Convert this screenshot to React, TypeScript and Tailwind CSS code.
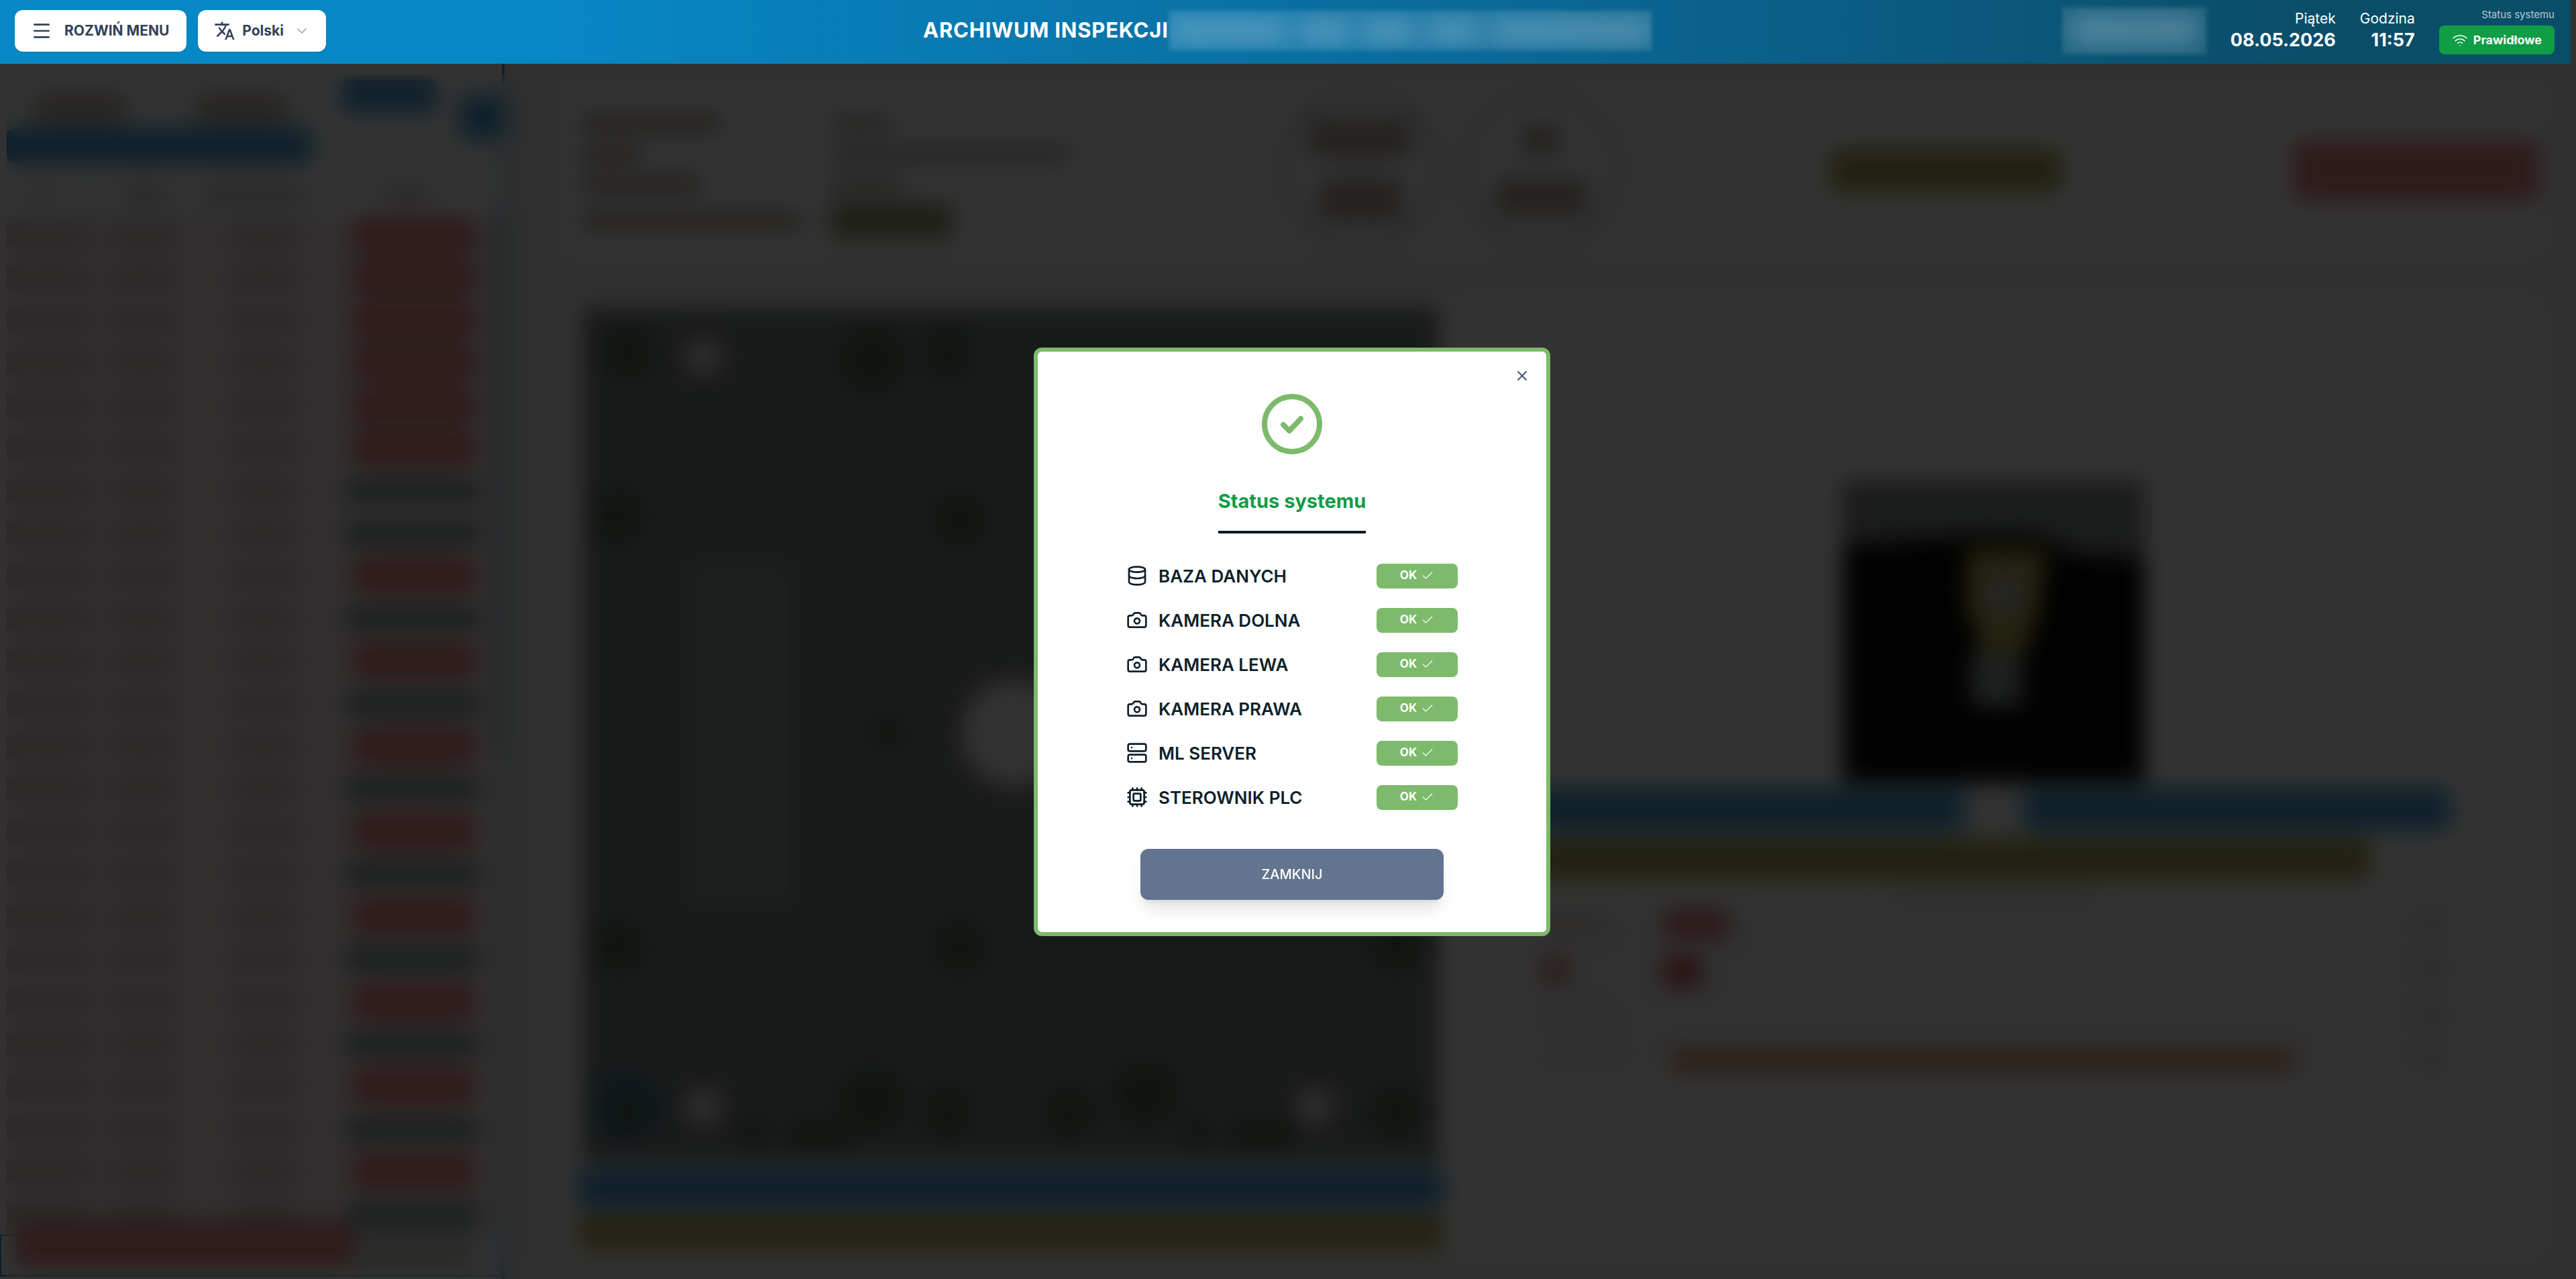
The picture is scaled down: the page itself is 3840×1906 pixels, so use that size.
import { Camera, Check, ChevronDown, Cpu, Database, Menu, Server, Wifi, X } from 'lucide-react';
import { MdTranslate } from 'react-icons/md';

const statusRows = [
  { label: 'BAZA DANYCH', icon: Database },
  { label: 'KAMERA DOLNA', icon: Camera },
  { label: 'KAMERA LEWA', icon: Camera },
  { label: 'KAMERA PRAWA', icon: Camera },
  { label: 'ML SERVER', icon: Server },
  { label: 'STEROWNIK PLC', icon: Cpu },
];

// true = rejected (red badge), false = accepted
const inspections = [
  true, true, true, true, true, true, false, false, true, false, true, false,
  true, false, true, false, true, false, true, false, true, false, true, false,
];

const Bar = ({ className }: { className: string }) => <div className={`shrink-0 rounded-xl ${className}`} />;

const Header = () => (
  <header className="relative z-20 mr-2 flex h-[95px] items-center justify-between bg-linear-to-r from-[#0788c6] from-20% via-[#0a6c9d] via-55% to-[#0a4d69] to-90% pr-6 pb-1 pl-[22px]">
    <div className="flex gap-[17px]">
      <button className="flex h-[62px] items-center gap-[18px] rounded-xl bg-white pr-[26px] pl-6 text-[21px] font-bold text-slate-700 shadow">
        <Menu className="size-8" strokeWidth={2} />
        ROZWIŃ MENU
      </button>
      <label className="relative flex h-[62px] items-center rounded-xl bg-white pl-6 text-slate-700 shadow">
        <MdTranslate className="size-8" />
        <select aria-label="Język" className="w-[135px] appearance-none pl-2.5 text-[21px] font-bold outline-none">
          <option>Polski</option>
        </select>
        <ChevronDown className="pointer-events-none absolute right-6 size-6 text-slate-400" strokeWidth={1.5} />
      </label>
    </div>

    <div className="absolute left-[1376px] flex items-center">
      <h1 className="text-[31px] font-bold tracking-wide text-white">ARCHIWUM INSPEKCJI</h1>
      <div className="flex h-[59px] w-[720px] items-center gap-4 overflow-hidden bg-white/10 blur-[3px]">
        <Bar className="h-9 w-44 bg-white/20 blur-lg" />
        <Bar className="h-9 w-20 bg-white/20 blur-lg" />
        <Bar className="h-9 w-20 bg-white/20 blur-lg" />
        <Bar className="h-9 w-20 bg-white/20 blur-lg" />
        <Bar className="h-9 w-60 bg-white/20 blur-lg" />
      </div>
    </div>

    <div className="flex items-center text-white">
      <div className="mr-9 h-[70px] w-[215px] overflow-hidden bg-white/10 p-3 blur-[3px]">
        <Bar className="h-11 w-full bg-white/20 blur-lg" />
      </div>
      <div className="mr-9 text-right">
        <p className="text-[21px] leading-7">Piątek</p>
        <p className="text-[27px] leading-9 font-bold">08.05.2026</p>
      </div>
      <div className="mr-9 text-right">
        <p className="text-[21px] leading-7">Godzina</p>
        <p className="text-[27px] leading-9 font-bold">11:57</p>
      </div>
      <div className="flex flex-col items-end gap-1">
        <p className="text-[15px] leading-6 text-white/70">Status systemu</p>
        <button className="flex h-[43px] items-center gap-2 rounded-lg bg-[#0f9d45] px-[19px] text-[18px] font-bold">
          <Wifi className="size-6" strokeWidth={1.5} />
          Prawidłowe
        </button>
      </div>
    </div>
  </header>
);

const Sidebar = () => (
  <aside className="flex w-[752px] shrink-0 flex-col border-r-4 border-[#46a0d2] bg-[#fafafa] pt-6">
    <div className="flex items-start pl-[50px]">
      <Bar className="mt-5 h-12 w-[140px] bg-[#c6bdb0]" />
      <Bar className="mt-5 ml-[100px] h-12 w-[140px] bg-[#c6bdb0]" />
      <Bar className="ml-20 h-12 w-[140px] bg-[#46a0d2]" />
      <Bar className="mt-6 ml-9 h-16 w-[62px] bg-[#46a0d2]" />
    </div>
    <Bar className="-mt-4 ml-[10px] h-[52px] w-[455px] bg-[#46a0d2]" />
    <div className="mt-9 flex h-5 items-center pl-[45px]">
      <Bar className="h-4 w-9 bg-[#c3bcb4]" />
      <Bar className="ml-[100px] h-5 w-[70px] bg-[#c3bcb4]" />
      <Bar className="ml-[50px] h-5 w-[155px] bg-[#c3bcb4]" />
      <Bar className="ml-[115px] h-5 w-[70px] bg-[#c3bcb4]" />
    </div>
    <div className="mt-[22px] flex flex-1 items-start bg-[#f5e8e8]">
      <div className="flex h-full flex-1 flex-col justify-between">
        {inspections.map((rejected, i) => (
          <div key={i} className="flex h-[60px] items-center pl-[10px]">
            <Bar className="h-9 w-[130px] bg-[#cdc9c3]" />
            <Bar className="ml-5 h-9 w-[105px] bg-[#cdc9c3]" />
            <Bar className="ml-[75px] h-9 w-[105px] bg-[#cdc9c3]" />
            {rejected ? (
              <Bar className="ml-[83px] h-[50px] w-[178px] bg-[#e67a7a]" />
            ) : (
              <Bar className="ml-[70px] h-9 w-[200px] bg-[#869f98]" />
            )}
          </div>
        ))}
      </div>
      <div className="h-[800px] w-[18px] bg-[#c8c8c8]" />
    </div>
    <div className="mb-1 flex h-[62px] items-start border-2 border-[#46a0d2] pl-6">
      <Bar className="-mt-5 h-16 w-[500px] bg-[#e68484]" />
      <Bar className="h-12 w-[180px] bg-[#d2d7c8]" />
    </div>
  </aside>
);

const Summary = () => (
  <section className="flex h-[270px] items-center justify-between rounded-2xl bg-[#fafafa] pr-4 pl-[34px]">
    <div className="flex w-[730px] gap-10 pt-5">
      <div className="flex w-[330px] flex-col gap-[22px]">
        <Bar className="h-6 w-[210px] bg-[#aaa094]" />
        <Bar className="h-6 w-[90px] bg-[#aaa094]" />
        <Bar className="h-6 w-[180px] bg-[#aaa094]" />
        <Bar className="mt-2 h-6 w-[330px] bg-[#aaa094]" />
      </div>
      <div className="flex flex-col gap-[22px]">
        <Bar className="h-6 w-[95px] bg-[#bbb6b0]" />
        <Bar className="h-6 w-[360px] bg-[#bbb6b0]" />
        <Bar className="h-6 w-[110px] bg-[#bbb6b0]" />
        <Bar className="-mt-2 h-14 w-[185px] bg-[#a0a07d]" />
      </div>
    </div>
    <div className="flex gap-7">
      <div className="flex size-[242px] flex-col items-center justify-center gap-8 rounded-full border-[10px] border-[#bebebe]">
        <Bar className="h-14 w-[150px] bg-[#b4aca2]" />
        <Bar className="h-16 w-[125px] bg-[#b4aca2]" />
      </div>
      <div className="flex size-[242px] flex-col items-center justify-center gap-9 rounded-full border-[10px] border-[#bebebe]">
        <Bar className="h-11 w-[58px] bg-[#b4aca2]" />
        <Bar className="h-14 w-[135px] bg-[#b4aca2]" />
      </div>
    </div>
    <Bar className="mr-9 h-16 w-[345px] bg-[#a5a55a]" />
    <Bar className="h-[88px] w-[365px] bg-[#e68484]" />
  </section>
);

const BoardImage = () => (
  <svg viewBox="0 0 1277 1275" className="w-full">
    <rect width="1277" height="1275" fill="#7a827f" />
    <g fill="#50624b">
      <circle cx="67" cy="69" r="36" />
      <circle cx="432" cy="78" r="46" />
      <circle cx="544" cy="69" r="34" />
      <circle cx="54" cy="312" r="36" />
      <circle cx="562" cy="317" r="36" />
      <circle cx="54" cy="953" r="36" />
      <circle cx="562" cy="953" r="36" />
      <circle cx="1212" cy="953" r="36" />
      <circle cx="432" cy="1182" r="46" />
      <circle cx="544" cy="1200" r="34" />
      <circle cx="726" cy="1200" r="34" />
      <circle cx="839" cy="1172" r="46" />
      <circle cx="1212" cy="1200" r="36" />
      <circle cx="455" cy="635" r="20" />
      <path d="M230 1245l25-45 25 40zM300 1250l30-50 25 30 45-40-10 65zM890 1245l25-45 25 40zM960 1250l30-50 25 30 45-40-10 65z" />
    </g>
    <rect x="163" y="387" width="147" height="500" fill="#8ca5a0" />
    <circle cx="67" cy="1192" r="48" fill="#3c7896" />
    <circle cx="67" cy="1200" r="28" fill="#50624b" />
    <circle cx="644" cy="635" r="80" fill="#faf5f5" />
    <g fill="#ebe1e1">
      <circle cx="180" cy="74" r="28" />
      <circle cx="180" cy="1191" r="28" />
      <circle cx="1091" cy="1191" r="28" />
    </g>
  </svg>
);

const CameraImage = () => (
  <svg viewBox="0 0 450 450" className="w-[450px]">
    <rect width="450" height="450" fill="#0a0a0a" />
    <path d="M0 0h450v115l-100-5-60-30-90 0-200 15z" fill="#828787" />
    <path d="M185 100h118l-8 85-25 75h-60l-28-80z" fill="#b4a546" />
    <path d="M208 135h65l-5 65h-58z" fill="#b9b9b4" />
    <rect x="192" y="250" width="74" height="85" fill="#96a09e" />
  </svg>
);

const Inspection = () => (
  <section className="flex flex-1 items-start rounded-2xl bg-[#fafafa] pt-[22px] pl-[30px]">
    <div className="flex w-[1290px] flex-col gap-[10px]">
      <div className="px-[6px]">
        <BoardImage />
      </div>
      <Bar className="h-[56px] bg-[#46a0d2]" />
      <Bar className="h-[54px] bg-[#b4a55a]" />
    </div>
    <div className="ml-[140px] flex w-[1360px] flex-col items-start pt-[260px]">
      <div className="mb-2 self-center">
        <CameraImage />
      </div>
      <div className="flex w-full gap-[88px]">
        <Bar className="h-[62px] flex-1 bg-[#46a0d2]" />
        <Bar className="h-[62px] flex-1 bg-[#46a0d2]" />
      </div>
      <Bar className="mt-3 h-[62px] w-[1242px] bg-[#a5a55a]" />
      <Bar className="mt-4 h-4 w-[320px] self-center bg-[#e1e1e1]" />
      <div className="mt-3 flex w-full justify-between bg-[#f2f2f2]">
        <div className="flex flex-col gap-6">
          <div className="flex w-[286px] justify-between">
            <Bar className="h-11 w-[110px] bg-[#e6e1dc]" />
            <Bar className="h-11 w-[98px] bg-[#dc7878]" />
          </div>
          <div className="flex w-[246px] justify-between">
            <Bar className="h-11 w-[50px] bg-[#dca0a0]" />
            <Bar className="h-12 w-[60px] bg-[#cd6464]" />
          </div>
          <Bar className="h-11 w-[110px] bg-[#e6e6e6]" />
          <div className="flex gap-[68px]">
            <Bar className="h-9 w-[130px] bg-[#ebe6e6]" />
            <Bar className="h-9 w-[930px] bg-[#dca078]" />
          </div>
        </div>
        <div className="flex w-[50px] flex-col justify-between">
          <Bar className="h-8 bg-[#dcdcdc]" />
          <Bar className="h-8 bg-[#dcdcdc]" />
          <Bar className="h-8 bg-[#dcdcdc]" />
          <Bar className="h-8 bg-[#dcdcdc]" />
        </div>
      </div>
    </div>
  </section>
);

const StatusDialog = () => (
  <div
    role="dialog"
    aria-modal="true"
    aria-labelledby="status-title"
    className="relative flex w-[770px] flex-col items-center rounded-xl border-[6px] border-[#7dba6b] bg-white pt-[63px] pb-12"
  >
    <button aria-label="Zamknij okno" className="absolute top-6 right-6 text-slate-600">
      <X className="size-6" strokeWidth={2} />
    </button>
    <svg viewBox="0 0 90 90" fill="none" className="size-[90px] text-[#7dba6b]" stroke="currentColor">
      <circle cx="45" cy="45" r="41" strokeWidth="8" />
      <path d="M32 46l9 9 17-18" strokeWidth="8" strokeLinecap="round" strokeLinejoin="round" />
    </svg>
    <h2 id="status-title" className="mt-[50px] border-b-4 border-gray-900 pb-6 text-[29px] leading-10 font-bold text-[#0f9d45]">
      Status systemu
    </h2>
    <ul className="mt-[45px] flex w-[494px] flex-col gap-[29px]">
      {statusRows.map(({ label, icon: Icon }) => (
        <li key={label} className="flex h-[37px] items-center text-[26px] font-semibold text-[#0f1f2a]">
          <Icon className="mr-4 size-8" strokeWidth={2} />
          {label}
          <span className="ml-auto flex h-[37px] w-[121px] items-center justify-center gap-1.5 rounded-lg bg-[#7dba6b] text-[17px] font-bold text-white">
            OK
            <Check className="size-5" strokeWidth={1.5} />
          </span>
        </li>
      ))}
    </ul>
    <button className="mt-[58px] h-[76px] w-[452px] rounded-xl bg-slate-500 text-xl font-medium text-white shadow-xl">
      ZAMKNIJ
    </button>
  </div>
);

const App = () => (
  <div className="flex min-h-screen flex-col overflow-hidden bg-[#323232] font-[Inter,sans-serif]">
    <Header />
    <main className="relative flex flex-1">
      <Sidebar />
      <div className="flex flex-1 flex-col gap-[46px] bg-[#e9e9e9] pt-6 pr-10 pb-6 pl-20">
        <Summary />
        <Inspection />
      </div>
      {/* blurred and dimmed backdrop */}
      <div className="absolute inset-0 top-4 left-[10px] backdrop-blur-lg" />
      <div className="absolute inset-0 bg-black/80" />
    </main>
    <div className="fixed inset-0 z-30 flex items-center justify-center pt-1.5 pl-3">
      <StatusDialog />
    </div>
  </div>
);

export default App;
